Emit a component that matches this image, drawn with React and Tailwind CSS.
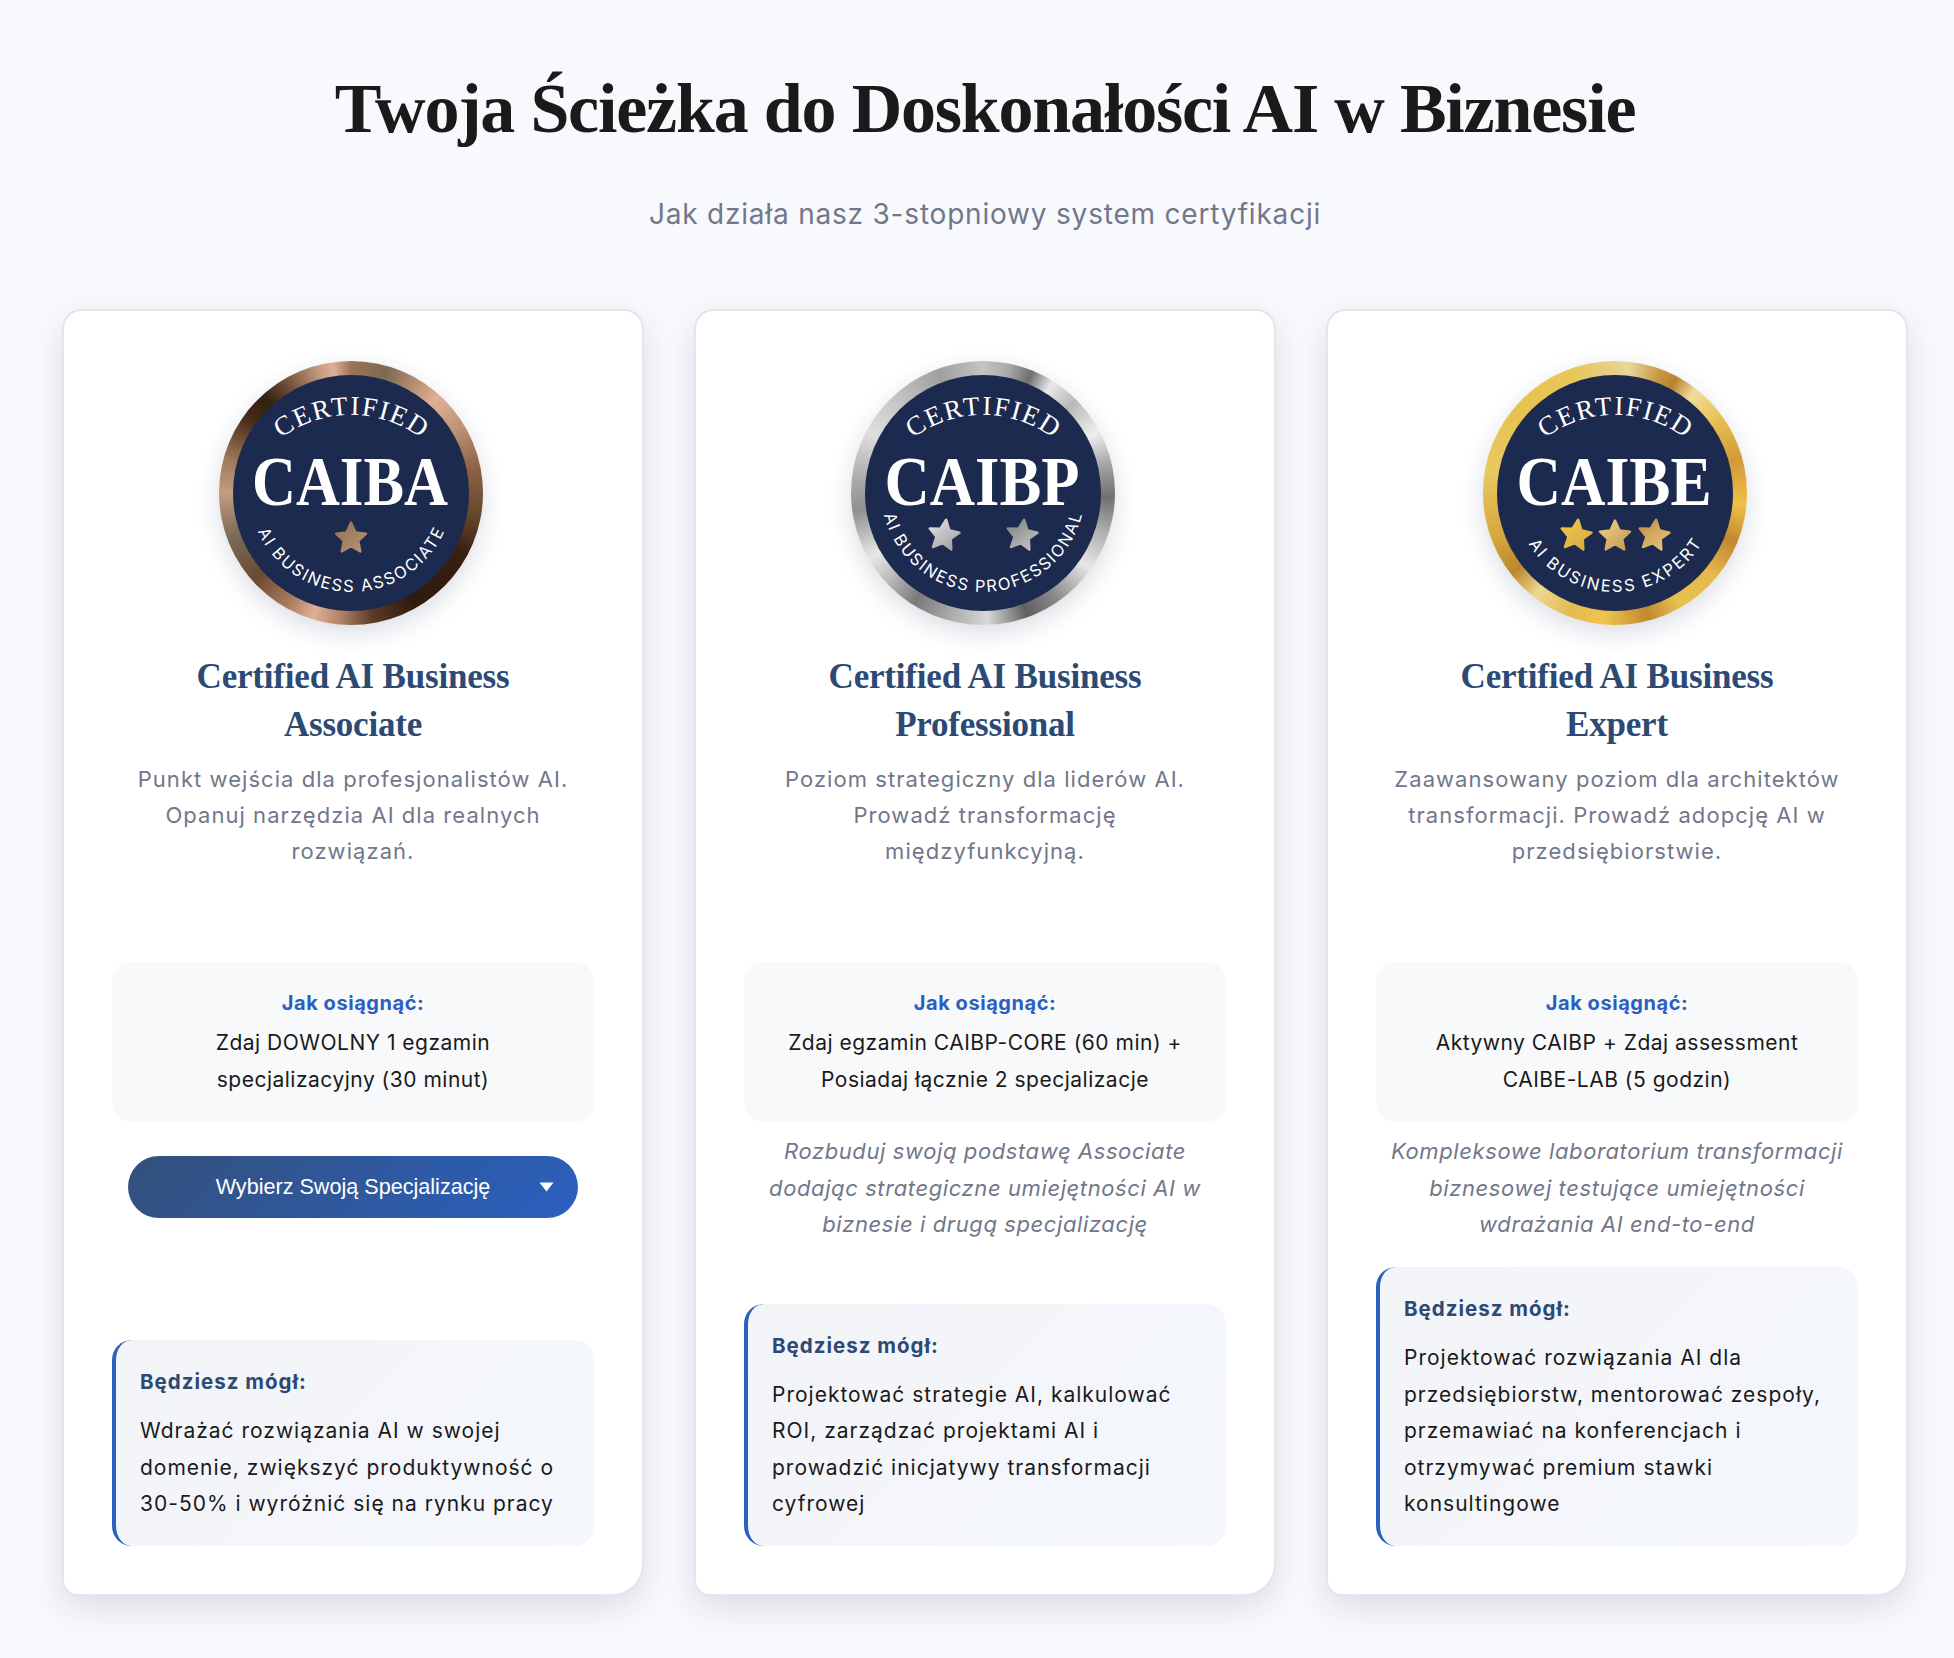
import React from "react";

const navy = "#1b2a4e";
const starPath = "M0 -15.5 L4.6 -5.6 L15 -4.4 L7.3 2.9 L9.3 13.5 L0 8.3 L-9.3 13.5 L-7.3 2.9 L-15 -4.4 L-4.6 -5.6 Z";

function Star({ x, y, fill, rot = 0 }) {
  return (
    <path d={starPath} transform={`translate(${x} ${y}) rotate(${rot})`} fill={fill} stroke={fill} strokeWidth="2.4" strokeLinejoin="round" />
  );
}

function Badge({ id, ringClass, code, codeLen, sub, subLen, stars, grads }) {
  return (
    <div className={`w-[264px] h-[264px] rounded-full flex items-center justify-center shadow-[0_8px_24px_rgba(27,42,78,0.16)] ${ringClass}`}>
      <svg width="236" height="236" viewBox="0 0 236 236">
        <defs>
          {grads.map((g, i) => (
            <linearGradient key={i} id={`${id}-s${i}`} x1="0" y1="0" x2="1" y2="1">
              <stop offset="0" stopColor={g[0]} />
              <stop offset="1" stopColor={g[1]} />
            </linearGradient>
          ))}
          <path id={`${id}-top`} d="M17.5 98 A116 116 0 0 1 218.5 98" fill="none" />
          <path id={`${id}-bot`} d="M16 115 A102 102 0 0 0 220 115" fill="none" />
        </defs>
        <circle cx="118" cy="118" r="118" fill={navy} />
        <text fill="#fff" fontFamily="'Liberation Serif', serif" fontSize="27" textLength="150" lengthAdjust="spacing">
          <textPath href={`#${id}-top`} startOffset="50%" textAnchor="middle">CERTIFIED</textPath>
        </text>
        <text x="117" y="130" fill="#fff" fontFamily="'Liberation Serif', serif" fontWeight="700" fontSize="69" textAnchor="middle" textLength={codeLen} lengthAdjust="spacingAndGlyphs">{code}</text>
        <text fill="#fff" fontFamily="'Inter', sans-serif" fontSize="16.5" fontWeight="400" textLength={subLen} lengthAdjust="spacing">
          <textPath href={`#${id}-bot`} startOffset="50%" textAnchor="middle">{sub}</textPath>
        </text>
        {stars.map((s, i) => (
          <Star key={i} x={s[0]} y={s[1]} rot={s[2]} fill={`url(#${id}-s${i})`} />
        ))}
      </svg>
    </div>
  );
}

function Card({ badge, line2, desc, how, note, button, benefit }) {
  return (
    <div className="flex flex-col bg-white border-2 border-[#e4e6eb] rounded-tl-[20px] rounded-tr-[20px] rounded-br-[32px] rounded-bl-[16px] p-12 shadow-[0_12px_32px_rgba(20,35,70,0.12)] font-['Inter',sans-serif]">
      <div className="flex justify-center h-[270px] pr-[4px] pt-[2px]">
        <Badge {...badge} />
      </div>
      <h3 className="mt-[24px] text-center font-['Liberation_Serif',serif] font-bold text-[35px] leading-[48px] text-[#2c4a73] tracking-[-0.2px]">
        Certified AI Business<br />{line2}
      </h3>
      <p className="mt-3 h-[201px] text-center text-[22px] leading-[36.2px] tracking-[1.05px] text-[#72778a]">
        {desc}
      </p>
      <div className="rounded-[20px] bg-[#f8f9fb] h-[160px] flex flex-col items-center pt-[27px] text-center">
        <div className="text-[20px] leading-[28px] font-bold tracking-[0.55px] text-[#2a5fbf]">Jak osiągnąć:</div>
        <div className="mt-[7px] text-[21px] leading-[37px] tracking-[0.5px] text-[#1a1a1a]">{how}</div>
      </div>
      {button && (
        <div className="mt-[34px] mx-4 h-[62px] rounded-full bg-[linear-gradient(135deg,#34507a,#2a60c0)] relative flex items-center justify-center">
          <span className="font-['Liberation_Sans',sans-serif] text-[21.6px] text-white">Wybierz Swoją Specjalizację</span>
          <svg className="absolute right-[24px] top-[26px]" width="15" height="10" viewBox="0 0 15 10">
            <path d="M0.5 0.5 H14.5 L7.5 9.5 Z" fill="#fff" />
          </svg>
        </div>
      )}
      {note && (
        <p className="mt-[11px] text-center italic text-[22px] leading-[36.6px] tracking-[0.6px] text-[#72778a]">{note}</p>
      )}
      <div className="mt-auto rounded-[20px] border-l-4 border-[#2a60c0] bg-[linear-gradient(135deg,#f3f4f8,#f4f7fc)] pl-6 pr-4 pt-[28px] pb-[23px]">
        <div className="text-[20.5px] leading-[28px] font-bold tracking-[1px] text-[#2c4a73]">Będziesz mógł:</div>
        <div className="mt-[17px] text-[21px] leading-[36.6px] tracking-[1px] text-[#1a1a1a]">{benefit}</div>
      </div>
    </div>
  );
}

const bronzeRing = "bg-[conic-gradient(#9a7454_0deg,#8a6f56_8deg,#7d6a55_16deg,#b58d70_30deg,#e0b096_42deg,#c09478_58deg,#8a5f40_80deg,#6b4a30_98deg,#3a2010_118deg,#2e1a0e_150deg,#5a3a24_170deg,#b08468_185deg,#e0b096_197deg,#a87a5c_210deg,#6b4a33_228deg,#7a6a58_250deg,#c49c80_270deg,#a07a5c_285deg,#4a2c1a_305deg,#33200f_318deg,#7a5a40_332deg,#c49a7e_345deg,#e0b096_352deg,#9a7454_360deg)]";
const silverRing = "bg-[conic-gradient(#c4c4c4_0deg,#a8a8a8_12deg,#6e6e6e_22deg,#e8e8e8_32deg,#b8b8b8_45deg,#eeeeee_62deg,#a0a0a0_78deg,#707070_92deg,#b0b0b0_108deg,#e6e6e6_125deg,#8a8a8a_145deg,#606060_160deg,#d8d8d8_178deg,#aaaaaa_195deg,#7a7a7a_212deg,#bdbdbd_228deg,#e8e8e8_240deg,#909090_262deg,#a8a8a8_275deg,#dedede_298deg,#c8c8c8_315deg,#a0a0a0_340deg,#c4c4c4_360deg)]";
const goldRing = "bg-[conic-gradient(#e6d08c_0deg,#e8d89c_6deg,#c89a48_20deg,#b9812c_28deg,#f0dc9c_38deg,#e8bf50_55deg,#d09a38_75deg,#f0c048_95deg,#c08830_112deg,#e4b84c_130deg,#e8c050_150deg,#bf8a30_165deg,#f0c44c_185deg,#e2bb50_200deg,#ecd890_218deg,#bc8630_232deg,#d6a83e_250deg,#e8c860_280deg,#e6c250_310deg,#e8c658_340deg,#e6d08c_360deg)]";

const cards = [
  {
    badge: {
      id: "a", ringClass: bronzeRing, code: "CAIBA", codeLen: 196, sub: "AI BUSINESS ASSOCIATE", subLen: 235,
      stars: [[118, 163, 0]],
      grads: [["#8a7058", "#bd9470"]],
    },
    line2: "Associate",
    desc: <>Punkt wejścia dla profesjonalistów AI.<br />Opanuj narzędzia AI dla realnych<br />rozwiązań.</>,
    how: <>Zdaj DOWOLNY 1 egzamin<br />specjalizacyjny (30 minut)</>,
    button: true,
    benefit: <>Wdrażać rozwiązania AI w swojej<br />domenie, zwiększyć produktywność o<br />30-50% i wyróżnić się na rynku pracy</>,
  },
  {
    badge: {
      id: "p", ringClass: silverRing, code: "CAIBP", codeLen: 195, sub: "AI BUSINESS PROFESSIONAL", subLen: 270,
      stars: [[79, 160, 8], [157, 160, 8]],
      grads: [["#e6e6e6", "#9c9c9c"], ["#7c7c7c", "#c8c8c8"]],
    },
    line2: "Professional",
    desc: <>Poziom strategiczny dla liderów AI.<br />Prowadź transformację<br />międzyfunkcyjną.</>,
    how: <>Zdaj egzamin CAIBP-CORE (60 min) +<br />Posiadaj łącznie 2 specjalizacje</>,
    note: <>Rozbuduj swoją podstawę Associate<br />dodając strategiczne umiejętności AI w<br />biznesie i drugą specjalizację</>,
    benefit: <>Projektować strategie AI, kalkulować<br />ROI, zarządzać projektami AI i<br />prowadzić inicjatywy transformacji<br />cyfrowej</>,
  },
  {
    badge: {
      id: "e", ringClass: goldRing, code: "CAIBE", codeLen: 195, sub: "AI BUSINESS EXPERT", subLen: 207,
      stars: [[79, 160, 8], [118, 161, 0], [157, 160, 8]],
      grads: [["#f0c850", "#d8a83c"], ["#eed088", "#c49850"], ["#b88c48", "#ecc878"]],
    },
    line2: "Expert",
    desc: <>Zaawansowany poziom dla architektów<br />transformacji. Prowadź adopcję AI w<br />przedsiębiorstwie.</>,
    how: <>Aktywny CAIBP + Zdaj assessment<br />CAIBE-LAB (5 godzin)</>,
    note: <>Kompleksowe laboratorium transformacji<br />biznesowej testujące umiejętności<br />wdrażania AI end-to-end</>,
    benefit: <>Projektować rozwiązania AI dla<br />przedsiębiorstw, mentorować zespoły,<br />przemawiać na konferencjach i<br />otrzymywać premium stawki<br />konsultingowe</>,
  },
];

export default function App() {
  return (
    <div className="min-h-[1658px] bg-[#f8f9fc] pl-[62px] pr-[46px] pt-[61px] pb-[60px]">
      <h1 className="text-center font-['Liberation_Serif',serif] font-bold text-[70px] leading-[96px] tracking-[-1.2px] text-[#1a1a1a]">
        Twoja Ścieżka do Doskonałości AI w Biznesie
      </h1>
      <p className="mt-[37px] text-center font-['Inter',sans-serif] text-[28px] leading-[40px] tracking-[0.8px] text-[#72778a]">
        Jak działa nasz 3-stopniowy system certyfikacji
      </p>
      <div className="mt-[75px] grid grid-cols-3 gap-[50px] h-[1287px]">
        {cards.map((c, i) => (
          <Card key={i} {...c} />
        ))}
      </div>
    </div>
  );
}
